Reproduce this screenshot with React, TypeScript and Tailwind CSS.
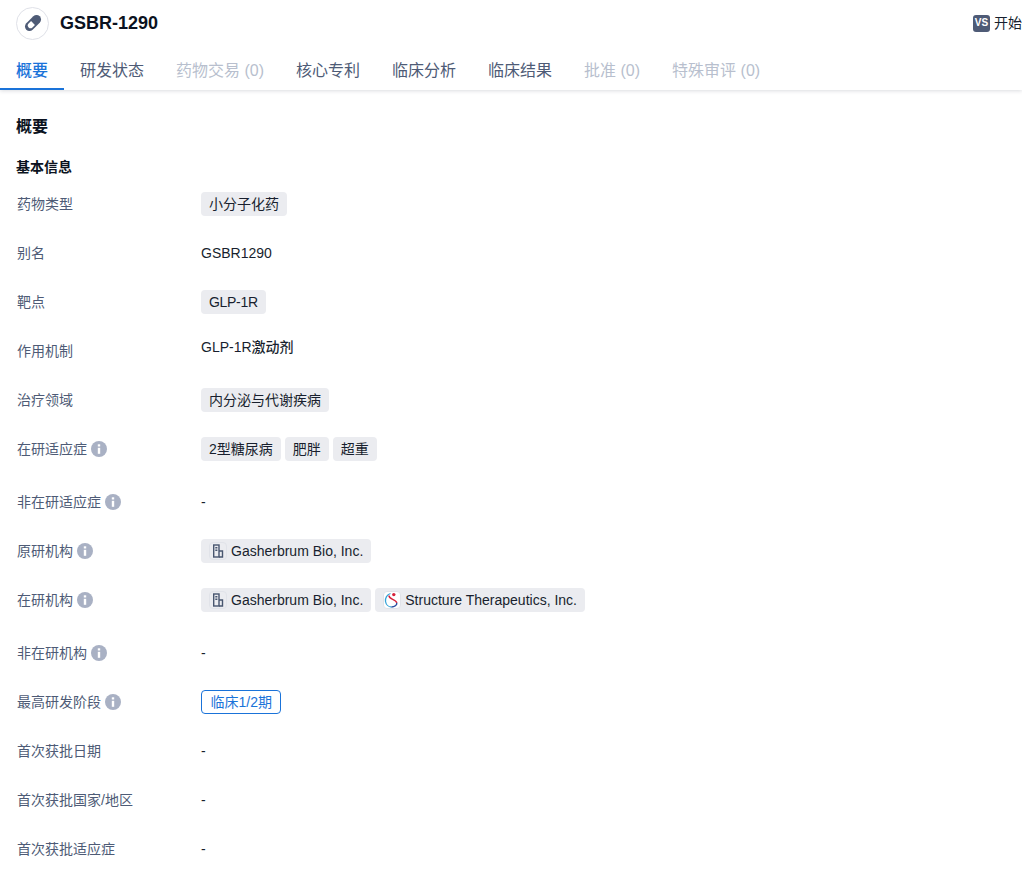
import React from "react"

const Info = () => (
  <svg width="16" height="16" viewBox="0 0 16 16" className="shrink-0">
    <circle cx="8" cy="8" r="8" fill="#a9b1c4" />
    <rect x="6.800" y="3.300" width="2.400" height="2.200" fill="#fff" />
    <rect x="6.800" y="6.800" width="2.400" height="6" fill="#fff" />
  </svg>
)

const Tag = ({ children, tight }: { children: React.ReactNode; tight?: boolean }) => (
  <span className={tight ? "inline-flex h-6 items-center rounded-[4px] bg-[#ebecf0] px-2 text-sm tracking-[-0.3px] text-[#181f2e]" : "inline-flex h-6 items-center rounded-[4px] bg-[#ebecf0] px-2 text-sm text-[#181f2e]"}>{children}</span>
)

const Building = () => (
  <span className="flex h-[18px] w-[18px] items-center justify-center rounded-[4px] border border-[#e1e3e9]">
    <svg width="12" height="14" viewBox="0 0 12 14" fill="none" stroke="#48566f" strokeWidth="1.400">
      <rect x="1.700" y="1" width="5.300" height="12" />
      <path d="M7 7h3.500v6H7M3.300 3.800h2.100M3.300 6.300h2.100" />
    </svg>
  </span>
)

const StructureLogo = () => (
  <span className="flex h-[18px] w-[18px] items-center justify-center rounded-[4px] border border-[#e1e3e9] bg-white">
    <svg width="16" height="16" viewBox="0 0 16 16" fill="none">
      <path d="M6.500 1.500C3 2.500 1 6 1.500 9.500C2 12.500 4.500 15 7.500 15" stroke="#35a3d8" strokeWidth="1.300" />
      <path d="M5 3.500C4.500 7.500 12 7 12.800 10.800" stroke="#d6213a" strokeWidth="1.400" />
      <path d="M12.800 10.800C13.100 13 10.500 15 7.500 15" stroke="#2a4fa0" strokeWidth="1.400" />
      <circle cx="9.800" cy="2.600" r="1.700" fill="#d6213a" />
    </svg>
  </span>
)

const OrgTag = ({ logo, name }: { logo: React.ReactNode; name: string }) => (
  <span className="inline-flex h-6 items-center gap-1 rounded-[4px] bg-[#ebecf0] px-2 text-sm text-[#181f2e]">
    {logo}
    {name}
  </span>
)

const Row = ({ label, info, tall, children }: { label: string; info?: boolean; tall?: boolean; children: React.ReactNode }) => (
  <div className={tall ? "mb-[29px] flex" : "mb-[25px] flex"}>
    <div className="flex h-6 w-[185px] shrink-0 items-center gap-1 pl-[1px] text-sm text-[#4e5b76]">
      {label}
      {info && <Info />}
    </div>
    <div className="flex min-h-6 items-center gap-1 text-sm text-[#181f2e]">{children}</div>
  </div>
)

const tabs = [
  { name: "概要", active: true },
  { name: "研发状态" },
  { name: "药物交易 (0)", disabled: true },
  { name: "核心专利" },
  { name: "临床分析" },
  { name: "临床结果" },
  { name: "批准 (0)", disabled: true },
  { name: "特殊审评 (0)", disabled: true },
]

export default function App() {
  return (
    <div className="h-[889px] overflow-hidden bg-white font-['Liberation_Sans','Noto_Sans_CJK_SC',sans-serif]">
      <div className="shadow-[0_1px_4px_rgba(30,40,60,0.16)]">
        <div className="flex h-[46px] items-center justify-between pl-4">
          <div className="flex items-center gap-[11px]">
            <span className="flex h-[33px] w-[33px] items-center justify-center rounded-full border border-[#dfe1e8]">
              <svg width="22" height="22" viewBox="0 0 22 22">
                <g transform="rotate(-45 11 11)">
                  <rect x="1.500" y="6.500" width="19" height="9" rx="4.500" fill="#4e5b76" />
                  <path d="M11 8.300H7.500a2.700 2.700 0 0 0 0 5.400H11z" fill="#fff" />
                </g>
              </svg>
            </span>
            <span className="text-lg font-bold text-[#0b1220]">GSBR-1290</span>
          </div>
          <div className="flex items-center gap-1 text-sm text-[#181f2e]">
            <span className="flex h-[17px] w-[17px] items-center justify-center rounded-[3px] bg-[#4e5b76] text-[10px] font-bold leading-none text-white">VS</span>
            <span className="w-[28px] whitespace-nowrap">开始</span>
          </div>
        </div>
        <div className="flex h-[44px]">
          {tabs.map((t) => (
            <div
              key={t.name}
              className={
                t.active
                  ? "flex items-center border-b-2 border-[#1a73d9] px-4 pt-2 text-base font-medium text-[#1a73d9]"
                  : t.disabled
                    ? "flex items-center border-b-2 border-transparent px-4 pt-2 text-base text-[#b8bfce]"
                    : "flex items-center border-b-2 border-transparent px-4 pt-2 text-base text-[#4e5b76]"
              }
            >
              {t.name}
            </div>
          ))}
        </div>
      </div>
      <div className="px-4 pt-[25px]">
        <div className="text-base font-bold leading-6 text-[#0b1220]">概要</div>
        <div className="mt-5 mb-[17px] text-sm font-bold leading-[16px] text-[#0b1220]">基本信息</div>
        <Row label="药物类型"><Tag>小分子化药</Tag></Row>
        <Row label="别名">GSBR1290</Row>
        <Row label="靶点"><Tag tight>GLP-1R</Tag></Row>
        <Row label="作用机制"><span className="-mt-2 font-medium">GLP-1R激动剂</span></Row>
        <Row label="治疗领域"><Tag>内分泌与代谢疾病</Tag></Row>
        <Row label="在研适应症" info tall><Tag>2型糖尿病</Tag><Tag>肥胖</Tag><Tag>超重</Tag></Row>
        <Row label="非在研适应症" info>-</Row>
        <Row label="原研机构" info><OrgTag logo={<Building />} name="Gasherbrum Bio, Inc." /></Row>
        <Row label="在研机构" info tall>
          <OrgTag logo={<Building />} name="Gasherbrum Bio, Inc." />
          <OrgTag logo={<StructureLogo />} name="Structure Therapeutics, Inc." />
        </Row>
        <Row label="非在研机构" info>-</Row>
        <Row label="最高研发阶段" info>
          <span className="flex h-6 items-center rounded-[4px] border border-[#1a73d9] px-[8.5px] text-sm text-[#1a73d9]">临床1/2期</span>
        </Row>
        <Row label="首次获批日期">-</Row>
        <Row label="首次获批国家/地区">-</Row>
        <Row label="首次获批适应症">-</Row>
      </div>
    </div>
  )
}
